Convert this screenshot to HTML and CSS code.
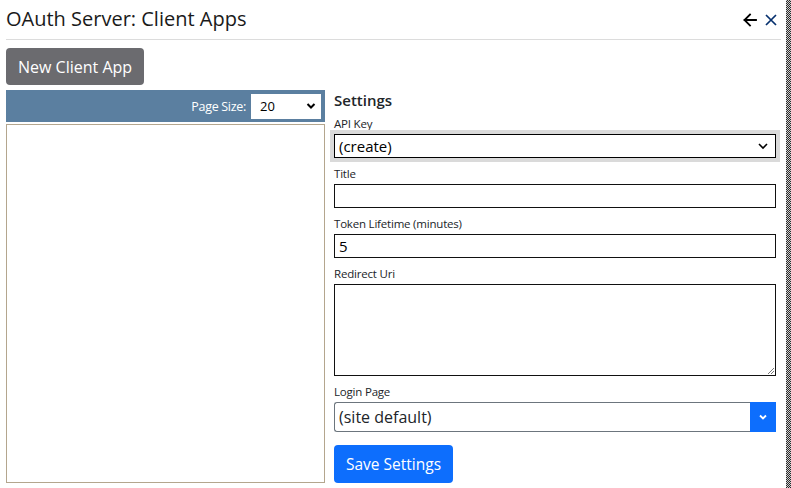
FILE: index.html
```html
<!DOCTYPE html>
<html lang="en">
<head>
<meta charset="utf-8">
<title>OAuth Server: Client Apps</title>
<link rel="stylesheet" href="styles.css">
</head>
<body>
<div class="window">
  <div class="page">
    <header class="titlebar">
      <h1 class="title">OAuth Server: Client Apps</h1>
      <div class="title-icons">
        <svg class="icon icon-back" width="16" height="16" viewBox="0 0 16 16" aria-hidden="true">
          <path d="M14 8H2.5M8 2.5L2.5 8 8 13.5" fill="none" stroke="#000" stroke-width="1.8" stroke-linecap="square"/>
        </svg>
        <svg class="icon icon-close" width="14" height="14" viewBox="0 0 14 14" aria-hidden="true">
          <path d="M2 2l10 10M12 2L2 12" fill="none" stroke="#06306e" stroke-width="1.7"/>
        </svg>
      </div>
    </header>

    <div class="toolbar">
      <button class="btn btn-gray" type="button">New Client App</button>
    </div>

    <div class="main">
      <section class="list-pane">
        <div class="list-head">
          <span class="page-size-label">Page Size:</span>
          <div class="page-size-select">
            <span>20</span>
            <svg width="10" height="8" viewBox="0 0 10 8" aria-hidden="true"><path d="M1.5 2l3.5 3.5L8.5 2" fill="none" stroke="#000" stroke-width="2"/></svg>
          </div>
        </div>
        <div class="list-body"></div>
      </section>

      <section class="settings">
        <h2 class="settings-title">Settings</h2>

        <label class="field-label first">API Key</label>
        <div class="native-select focused">
          <span>(create)</span>
          <svg width="12" height="8" viewBox="0 0 12 8" aria-hidden="true"><path d="M2 2l4 4 4-4" fill="none" stroke="#000" stroke-width="1.6"/></svg>
        </div>

        <label class="field-label">Title</label>
        <div class="text-input"></div>

        <label class="field-label">Token Lifetime (minutes)</label>
        <div class="text-input">5</div>

        <label class="field-label">Redirect Uri</label>
        <div class="text-area">
          <svg class="grip" width="10" height="10" viewBox="0 0 10 10" aria-hidden="true"><path d="M9 3L3 9M9 6L6 9" stroke="#777" stroke-width="1"/></svg>
        </div>

        <label class="field-label">Login Page</label>
        <div class="combo">
          <div class="combo-value">(site default)</div>
          <div class="combo-btn">
            <svg width="10" height="8" viewBox="0 0 10 8" aria-hidden="true"><path d="M2 2.5l3 3 3-3" fill="none" stroke="#fff" stroke-width="1.8"/></svg>
          </div>
        </div>

        <button class="btn btn-blue" type="button">Save Settings</button>
      </section>
    </div>
  </div>
  <div class="edge"></div>
</div>
</body>
</html>
```

FILE: styles.css
```css
* { box-sizing: border-box; }

html, body {
  margin: 0;
  padding: 0;
  background: #fff;
}

body {
  font-family: "Open Sans", "Noto Sans", "Liberation Sans", sans-serif;
  color: #212529;
}

.window {
  display: flex;
  width: 791px;
  height: 488px;
  overflow: hidden;
}

.page {
  flex: 1;
  padding: 0 5px 0 6px;
  display: flex;
  flex-direction: column;
}

.edge {
  width: 5px;
  background-color: #9a9a9a;
  background-image: repeating-conic-gradient(#2a2a2a 0 25%, #d0d0d0 0 50%);
  background-size: 2px 2px;
}

/* title bar */
.titlebar {
  display: flex;
  align-items: center;
  justify-content: space-between;
  height: 40px;
  border-bottom: 1px solid #dcdcdc;
  padding-bottom: 1px;
}

.title {
  margin: 0;
  font-size: 20px;
  font-weight: 400;
  line-height: 26px;
  letter-spacing: 0;
  color: #1a1a1a;
}

.title-icons {
  display: flex;
  align-items: center;
  gap: 6px;
  padding-right: 3px;
  padding-top: 1px;
}

.icon { display: block; }

/* toolbar */
.toolbar {
  padding-top: 8px;
}

.btn {
  border: 0;
  border-radius: 4px;
  color: #fff;
  font-family: inherit;
  cursor: pointer;
  display: inline-flex;
  align-items: center;
  justify-content: center;
}

.btn-gray {
  background: #6b6b6f;
  height: 37px;
  padding: 0 12px;
  font-size: 16px;
}

.btn-blue {
  background: #0d6efd;
  height: 38px;
  padding: 0 12px;
  font-size: 15.5px;
  margin-top: 13px;
  align-self: flex-start;
}

/* main */
.main {
  display: flex;
  gap: 9px;
  padding-top: 5px;
  flex: 1;
}

.list-pane {
  width: 319px;
  display: flex;
  flex-direction: column;
  gap: 2px;
  padding-bottom: 5px;
}

.list-head {
  height: 32px;
  background: #5b7fa0;
  display: flex;
  align-items: center;
  justify-content: flex-end;
  padding-right: 4px;
  gap: 5px;
}

.page-size-label {
  color: #fff;
  font-size: 12.5px;
  letter-spacing: -0.3px;
}

.page-size-select {
  width: 70px;
  height: 25px;
  background: #fff;
  display: flex;
  align-items: center;
  justify-content: space-between;
  padding: 0 5px 0 9px;
  font-size: 13px;
  color: #000;
}

.list-body {
  flex: 1;
  border: 1px solid #b4a68e;
  background: #fff;
}

/* settings */
.settings {
  flex: 1;
  display: flex;
  flex-direction: column;
  padding-right: 5px;
}

.settings-title {
  margin: 0;
  font-size: 15px;
  font-weight: 600;
  line-height: 21px;
  color: #212529;
}

.field-label {
  display: block;
  font-size: 11.5px;
  line-height: 16px;
  margin-top: 8px;
  margin-bottom: 2px;
  letter-spacing: -0.2px;
  color: #212529;
}

.field-label.first {
  margin-top: 5px;
}

.native-select {
  height: 24px;
  border: 1px solid #000;
  box-shadow: 0 0 0 4px #dadada;
  display: flex;
  align-items: center;
  justify-content: space-between;
  padding: 0 6px 0 4px;
  font-size: 15px;
  color: #000;
  background: #fff;
}

.text-input {
  height: 24px;
  border: 1px solid #111;
  display: flex;
  align-items: center;
  padding: 0 4px;
  font-size: 15px;
  color: #000;
}

.text-area {
  height: 92px;
  border: 1px solid #111;
  display: flex;
  align-items: flex-end;
  justify-content: flex-end;
}

.grip { display: block; }

.combo {
  height: 30px;
  display: flex;
}

.combo-value {
  flex: 1;
  border: 1px solid #6c757d;
  border-right: 0;
  border-radius: 3px 0 0 3px;
  display: flex;
  align-items: center;
  padding: 0 4px;
  font-size: 16px;
  color: #212529;
}

.combo-btn {
  width: 26px;
  background: #0d6efd;
  display: flex;
  align-items: center;
  justify-content: center;
}
```
